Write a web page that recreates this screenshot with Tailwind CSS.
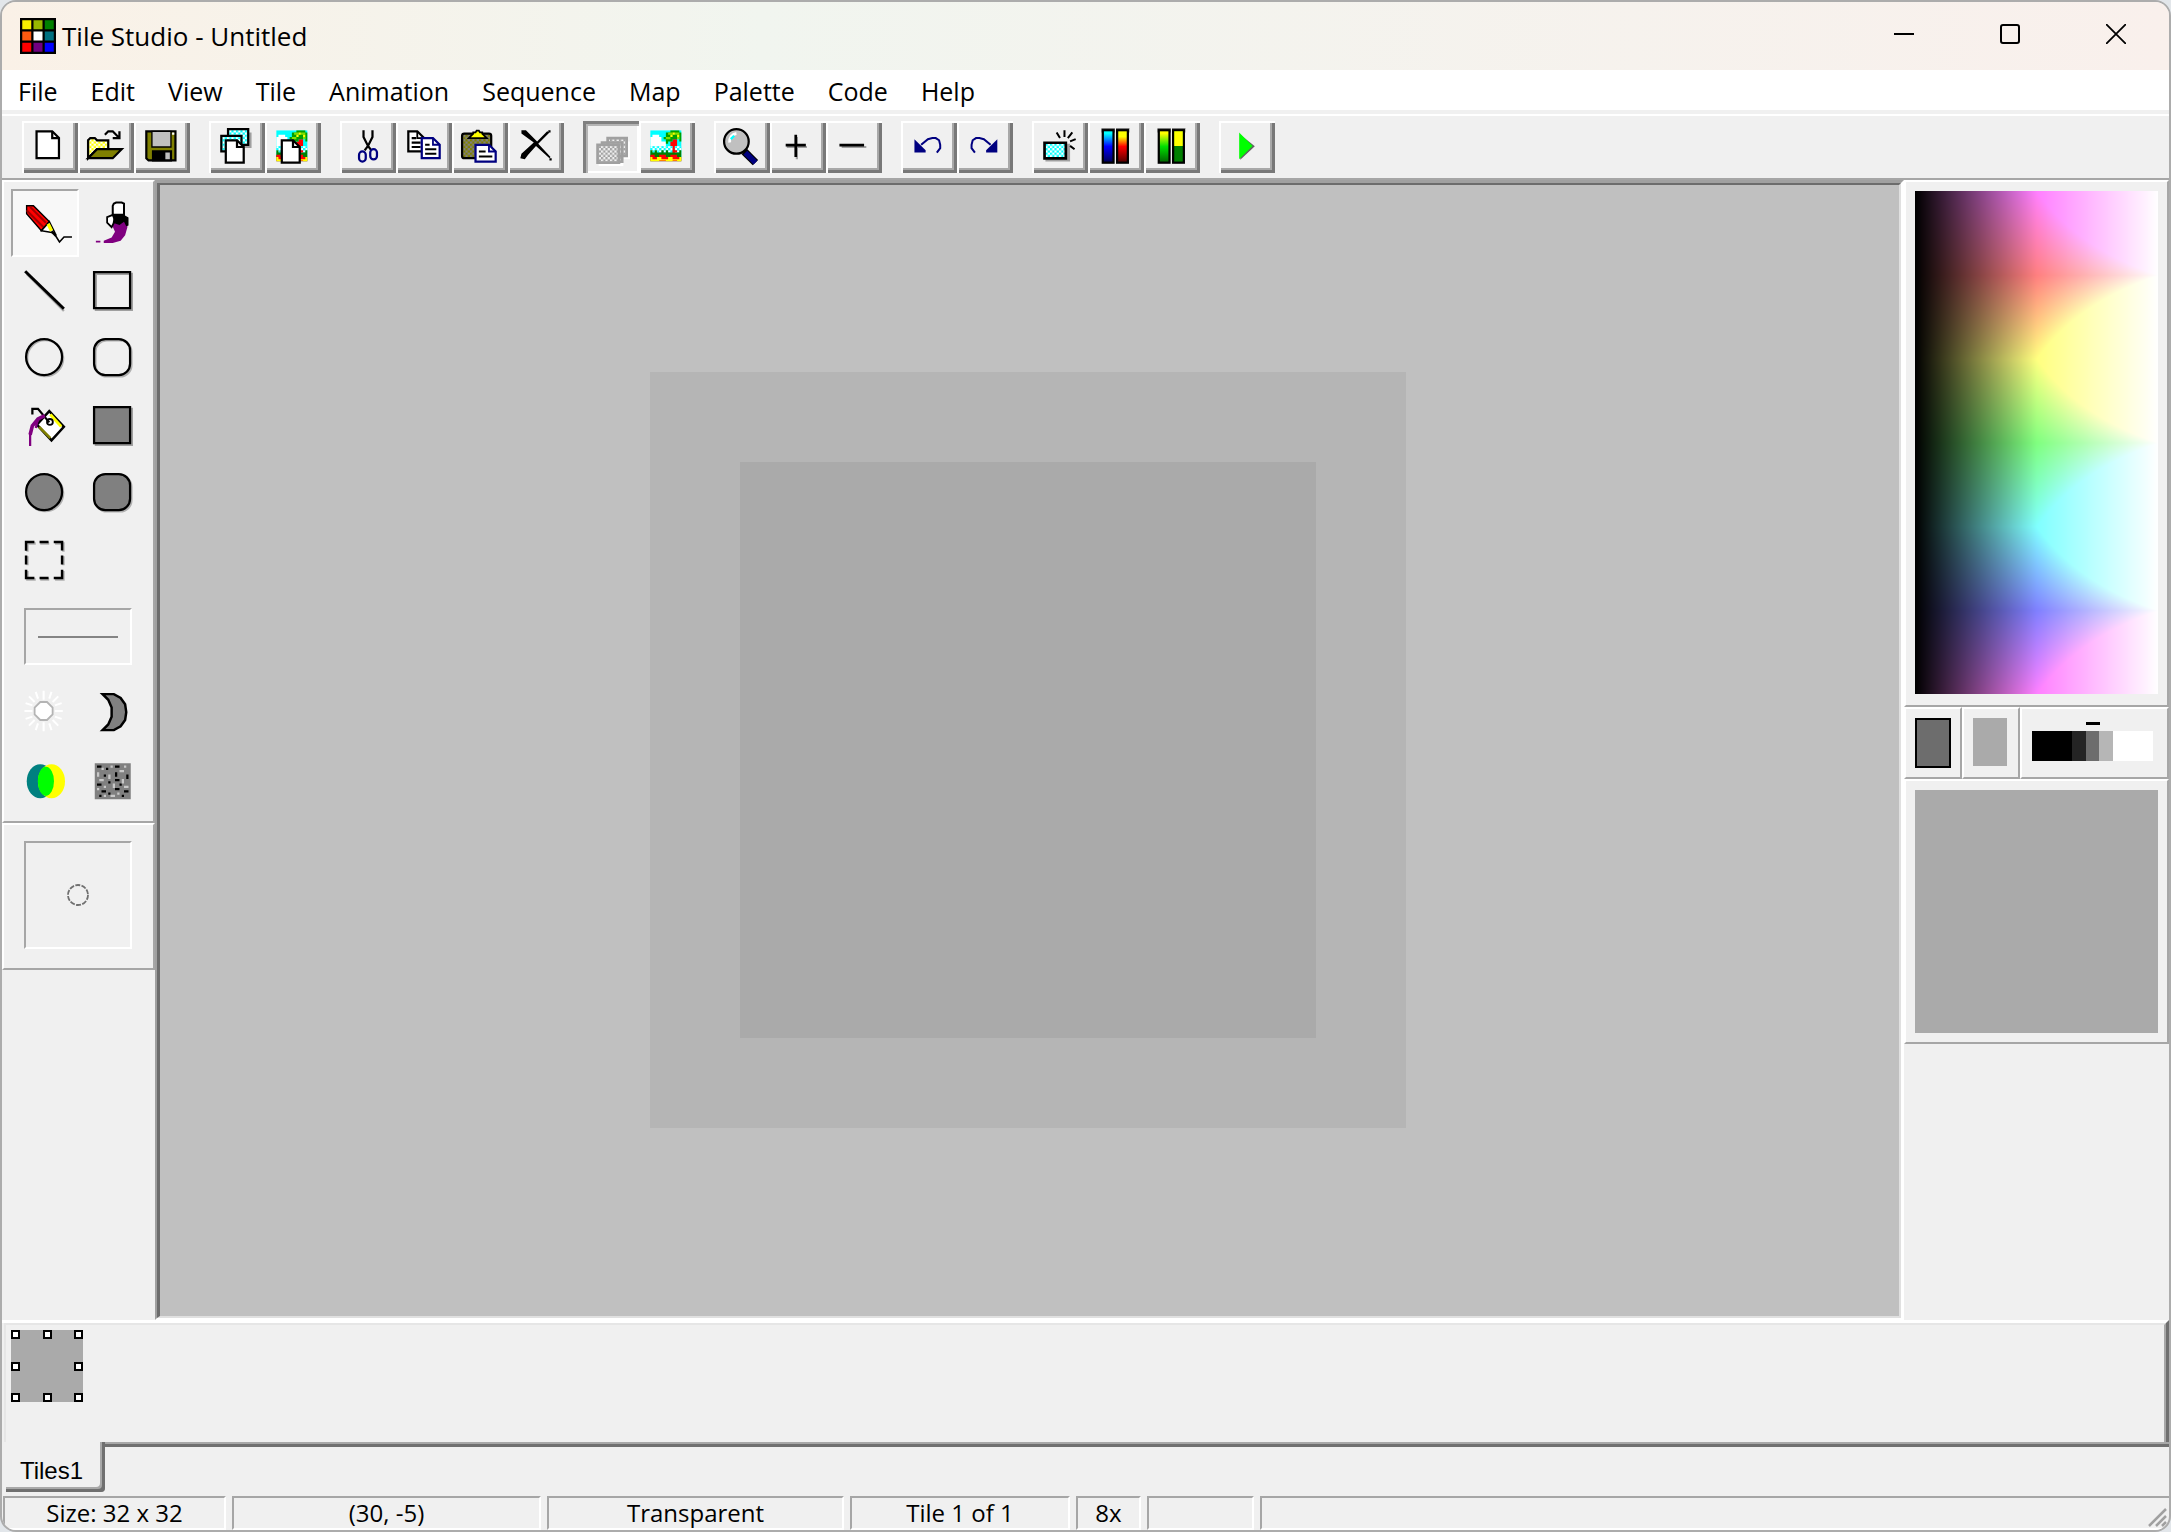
<!DOCTYPE html>
<html lang="en">
<head>
  <meta charset="UTF-8" />
  <meta name="viewport" content="width=device-width, initial-scale=1.0"/>
  <title>Tile Studio - Untitled</title>
  <script src="https://cdn.jsdelivr.net/npm/@tailwindcss/browser@4"></script>
</head>
<body class="bg-[#e2e6ea] text-black font-['Open_Sans','Noto_Sans',sans-serif]">

  <!-- shared patterns and drawings -->
  <svg class="absolute w-0 h-0" aria-hidden="true">
    <defs>
      <pattern id="ditherCyan" width="2" height="2" patternUnits="userSpaceOnUse"><path fill="#fff" d="M0 0h2v2H0z"/><path fill="#00ffff" d="M0 0h1v1H0zM1 1h1v1H1z"/></pattern>
      <pattern id="ditherYellow" width="2" height="2" patternUnits="userSpaceOnUse"><path fill="#fff" d="M0 0h2v2H0z"/><path fill="#ffff00" d="M0 0h1v1H0zM1 1h1v1H1z"/></pattern>
      <pattern id="ditherOlive" width="2" height="2" patternUnits="userSpaceOnUse"><path fill="#808080" d="M0 0h2v2H0z"/><path fill="#808000" d="M0 0h1v1H0zM1 1h1v1H1z"/></pattern>
      <pattern id="ditherGray" width="2" height="2" patternUnits="userSpaceOnUse"><path fill="#efefef" d="M0 0h2v2H0z"/><path fill="#a0a0a0" d="M0 0h1v1H0zM1 1h1v1H1z"/></pattern>
      <linearGradient id="coolBar" x2="0" y2="1"><stop offset="0.1" stop-color="#00ffff"/><stop offset="0.5" stop-color="#0000ff"/><stop offset="1" stop-color="#000050"/></linearGradient>
      <linearGradient id="warmBar" x2="0" y2="1"><stop offset="0.2" stop-color="#ffff00"/><stop offset="0.5" stop-color="#ff0000"/><stop offset="1" stop-color="#500000"/></linearGradient>
      <linearGradient id="greenBar" x2="0" y2="1"><stop offset="0.1" stop-color="#ffff00"/><stop offset="0.5" stop-color="#00e000"/><stop offset="1" stop-color="#006000"/></linearGradient>
    </defs>
    <symbol id="scene" viewBox="0 0 14 14">
      <path fill="#00ffff" d="M0 0h14v14H0z"/>
      <path fill="#fff" d="M0 3h1V2h3v1h1v2h2v2H0z"/>
      <path fill="url(#ditherCyan)" d="M0 7h14v3H0z"/>
      <path fill="#008000" d="M0 9h1v1h1V9h1v1h2V9h1v1h1V9h1v1h2V9h1v1h2V9h1v3H0z"/>
      <path fill="#ff0000" d="M0 11h2v1h2v-1h3v1h2v-1h3v1h2v2H0z"/>
      <path fill="#ffff00" d="M0 12h1v1h2v-1h2v1h3v-1h2v1h3v-1h1v2h-2v-.5h-2v.5H7v-.5H4v.5H0z"/>
      <path fill="#ff0000" d="M10 4h2v3h-1v2h1v1h-2V7h-1V5h1z"/>
      <path fill="#00a000" d="M7 1h2V0h4v1h1v4h-1V3h-1v1h-2v1H8v1H7V4H6V3h1z"/>
      <path fill="#80e000" d="M8 1h2v1H8zM11 1h2v1h-2zM7 3h2v1H7zM12 3h1v1h-1z"/>
      <path fill="#ffff00" d="M10 1h1v1h-1zM9 2h1v1H9zM12 2h1v1h-1z"/>
    </symbol>
  </svg>

  <div class="relative min-h-screen flex flex-col border-2 border-[#acacac] rounded-2xl overflow-hidden bg-[#f0f0f0]">

    <!-- TITLE BAR -->
    <header class="h-[68px] flex items-center pl-[18px] bg-linear-to-r from-[#faf1e7] via-[#f1f5ef] via-35% to-[#f9f0ec]">
      <svg class="w-9 h-9" viewBox="0 0 16 16">
        <path d="M0 0h16v16H0z"/>
        <path fill="#f8f000" d="M1 1h4v4H1z"/><path fill="#98b800" d="M6 1h4v4H6z"/><path fill="#008000" d="M11 1h4v4h-4z"/>
        <path fill="#ff5a10" d="M1 6h4v4H1z"/><path fill="#fff" d="M6 6h4v4H6z"/><path fill="#007080" d="M11 6h4v4h-4z"/>
        <path fill="#ff0000" d="M1 11h4v4H1z"/><path fill="#700080" d="M6 11h4v4H6z"/><path fill="#0000ff" d="M11 11h4v4h-4z"/>
      </svg>
      <h1 class="ml-1.5 text-[26px] leading-8 flex-1">Tile Studio - Untitled</h1>
      <div class="flex h-full">
        <button aria-label="Minimize" class="w-[106px] h-16 flex items-center justify-center"><svg class="w-5 h-5" viewBox="0 0 20 20"><path stroke="#000" stroke-width="2" d="M0 10h20"/></svg></button>
        <button aria-label="Maximize" class="w-[106px] h-16 flex items-center justify-center"><svg class="w-5 h-5" viewBox="0 0 20 20"><rect x="1" y="1" width="18" height="18" rx="2" fill="none" stroke="#000" stroke-width="2"/></svg></button>
        <button aria-label="Close" class="w-[106px] h-16 flex items-center justify-center"><svg class="w-5 h-5" viewBox="0 0 20 20"><path stroke="#000" stroke-width="1.8" d="M0 0l20 20M20 0L0 20"/></svg></button>
      </div>
    </header>

    <!-- MENU -->
    <nav class="h-10 flex items-center gap-[33px] pl-4 pt-0.5 bg-white text-[25px] leading-8">
      <button>File</button>
      <button>Edit</button>
      <button>View</button>
      <button>Tile</button>
      <button>Animation</button>
      <button>Sequence</button>
      <button>Map</button>
      <button>Palette</button>
      <button>Code</button>
      <button>Help</button>
    </nav>

    <!-- TOOLBAR -->
    <div class="mt-1 h-16 flex items-start gap-[19px] pl-5 pt-[5px] border-t-2 border-white">
      <div class="flex">
        <button aria-label="New" class="shadow-[inset_2px_2px_#fff,inset_-3px_-3px_#787878,inset_-5px_-5px_#a8a8a8]">
          <svg class="w-14 h-13" viewBox="0 0 25 23"><path fill="#fff" stroke="#000" d="M6.5 4.5h7l3 3v9h-10z"/><path fill="none" stroke="#000" d="M13.5 4.5v3h3"/></svg>
        </button>
        <button aria-label="Open" class="shadow-[inset_2px_2px_#fff,inset_-3px_-3px_#787878,inset_-5px_-5px_#a8a8a8]">
          <svg class="w-14 h-13" viewBox="0 0 25 23">
            <path fill="url(#ditherYellow)" stroke="#000" d="M4.500 16.500v-8l1-1h2l1 1h5v4h-5z"/>
            <path fill="#808000" stroke="#000" d="M4.500 16.500l4-4h11l-4 4z"/>
            <path fill="none" stroke="#000" d="M12 6l1.500-1.500h2l2.500 2.500M18.500 4.500v3h-3"/>
          </svg>
        </button>
        <button aria-label="Save" class="shadow-[inset_2px_2px_#fff,inset_-3px_-3px_#787878,inset_-5px_-5px_#a8a8a8]">
          <svg class="w-14 h-13" viewBox="0 0 25 23">
            <path fill="#808000" stroke="#000" d="M5.500 4.500h13v13h-12l-1-1z"/>
            <path fill="#c0c0c0" stroke="#000" stroke-width=".6" d="M8 4.500h8.500v7H8z"/>
            <path d="M8 13h9v5H8z"/><path fill="#c0c0c0" d="M14 14h2v3h-2z"/><path fill="#fff" d="M17 5h1v1h-1z"/>
          </svg>
        </button>
      </div>
      <div class="flex">
        <button aria-label="New tile set" class="shadow-[inset_2px_2px_#fff,inset_-3px_-3px_#787878,inset_-5px_-5px_#a8a8a8]">
          <svg class="w-14 h-13" viewBox="0 0 25 23">
            <path fill="#a0a0a0" d="M10 5h9v7h-9z"/>
            <path fill="url(#ditherCyan)" stroke="#000" d="M8.500 3.500h9v7h-9z"/>
            <path fill="url(#ditherCyan)" stroke="#000" d="M5.500 6.500h9v7h-9z"/>
            <path fill="#fff" stroke="#000" d="M7.500 8.500h5l3 3v7h-8z"/><path fill="none" stroke="#000" d="M12.500 8.500v3h3"/>
          </svg>
        </button>
        <button aria-label="New map" class="shadow-[inset_2px_2px_#fff,inset_-3px_-3px_#787878,inset_-5px_-5px_#a8a8a8]">
          <svg class="w-14 h-13" viewBox="0 0 25 23">
            <use href="#scene" x="5" y="4" width="14" height="14"/>
            <path fill="#fff" stroke="#000" d="M7.500 8.500h5l3 3v7h-8z"/><path fill="none" stroke="#000" d="M12.500 8.500v3h3"/>
          </svg>
        </button>
      </div>
      <div class="flex">
        <button aria-label="Cut" class="shadow-[inset_2px_2px_#fff,inset_-3px_-3px_#787878,inset_-5px_-5px_#a8a8a8]">
          <svg class="w-14 h-13" viewBox="0 0 25 23">
            <path fill="none" stroke="#000" d="M10.500 4v3l2 4 1.500 2M14.500 4v3l-2 4-1.500 2"/>
            <g fill="none" stroke="#000080"><rect x="8.500" y="13.500" width="3" height="4.500" rx="1.500"/><rect x="13.500" y="12.500" width="3" height="4.500" rx="1.500"/></g>
          </svg>
        </button>
        <button aria-label="Copy" class="shadow-[inset_2px_2px_#fff,inset_-3px_-3px_#787878,inset_-5px_-5px_#a8a8a8]">
          <svg class="w-14 h-13" viewBox="0 0 25 23">
            <path fill="#fff" stroke="#000" d="M5.500 4.500h4l3 3v6h-7zM7 7.500h2M7 9.500h4M7 11.500h4"/><path fill="none" stroke="#000" stroke-width=".8" d="M9.500 4.500v3h3"/>
            <path fill="#fff" stroke="#000080" d="M11.500 7.500h5l3 3v6h-8z"/><path fill="none" stroke="#000080" stroke-width=".8" d="M16.500 7.500v3h3"/>
            <path stroke="#000" stroke-width=".9" d="M13 10.500h2M13 12.500h5M13 14.500h5"/>
          </svg>
        </button>
        <button aria-label="Paste" class="shadow-[inset_2px_2px_#fff,inset_-3px_-3px_#787878,inset_-5px_-5px_#a8a8a8]">
          <svg class="w-14 h-13" viewBox="0 0 25 23">
            <rect x="4.500" y="5.500" width="13" height="11" rx="1" fill="url(#ditherOlive)" stroke="#000"/>
            <path fill="#ffff00" stroke="#000" stroke-width=".8" d="M7.500 7.500l2-2V5h1l.5-.8h1l.5.8h1v.5l2 2z"/>
            <path fill="#fff" stroke="#000080" d="M10.500 10.500h6l3 3v4.500h-9z"/><path fill="none" stroke="#000080" stroke-width=".8" d="M16.500 10.500v3h3"/>
            <path stroke="#000" stroke-width=".9" d="M12 13.500h3M12 15.700h6"/>
          </svg>
        </button>
        <button aria-label="Delete" class="shadow-[inset_2px_2px_#fff,inset_-3px_-3px_#787878,inset_-5px_-5px_#a8a8a8]">
          <svg class="w-14 h-13" viewBox="0 0 25 23">
            <path d="M6 4h2l5 5 4.500-4.500 1 .500-5 5 5.500 6-.500.500-6-5.500-3.500 4-1.500 2-2-.500.500-2 5.500-5L6 5.500z"/><path d="M18 4h1v1h-1zM18.500 16.500h1v1h-1z"/>
          </svg>
        </button>
      </div>
      <div class="flex">
        <button aria-label="Tiles" aria-pressed="true" class="shadow-[inset_3px_3px_#808080,inset_5px_5px_#b4b4b4,inset_-2px_-2px_#fff]">
          <svg class="w-14 h-13" viewBox="0 0 25 23">
            <path fill="#fff" d="M10 9h11v8h-3v3H7v-1h10v-3h3z"/>
            <path fill="url(#ditherGray)" stroke="#a0a0a0" stroke-width="1.200" d="M11 7.500h8.500v8H11zM8.500 9.500h9v8.500h-9z"/>
            <path fill="url(#ditherGray)" stroke="#a0a0a0" stroke-width="1.200" d="M6.500 10.500h9.500v8H6.500z"/>
          </svg>
        </button>
        <button aria-label="Map" class="shadow-[inset_2px_2px_#fff,inset_-3px_-3px_#787878,inset_-5px_-5px_#a8a8a8]">
          <svg class="w-14 h-13" viewBox="0 0 25 23"><use href="#scene" x="5" y="4" width="14" height="14"/></svg>
        </button>
      </div>
      <div class="flex">
        <button aria-label="Zoom" class="shadow-[inset_2px_2px_#fff,inset_-3px_-3px_#787878,inset_-5px_-5px_#a8a8a8]">
          <svg class="w-14 h-13" viewBox="0 0 25 23">
            <path stroke="#000" stroke-width="3.400" d="M13.500 13.500l5 5"/><path stroke="#000080" stroke-width="2.400" d="M14 14l4.500 4.500"/>
            <circle cx="10" cy="9" r="5.500" fill="#c0c0c0" stroke="#000"/><path fill="none" stroke="#fff" stroke-width="1.300" d="M7 9.500A3.500 3.500 0 0 1 10 5.500"/><path stroke="#00ffff" d="M7.500 8l1.500-1.500"/>
          </svg>
        </button>
        <button aria-label="Zoom in" class="shadow-[inset_2px_2px_#fff,inset_-3px_-3px_#787878,inset_-5px_-5px_#a8a8a8]">
          <svg class="w-14 h-13" viewBox="0 0 25 23"><path stroke="#a0a0a0" d="M7.500 11.500h9M12 7v10"/><path stroke="#000" stroke-width="1.200" d="M7 10.700h9M11.500 6v10"/></svg>
        </button>
        <button aria-label="Zoom out" class="shadow-[inset_2px_2px_#fff,inset_-3px_-3px_#787878,inset_-5px_-5px_#a8a8a8]">
          <svg class="w-14 h-13" viewBox="0 0 25 23"><path stroke="#a0a0a0" d="M7 11.500h11"/><path stroke="#000" stroke-width="1.200" d="M6 10.700h11"/></svg>
        </button>
      </div>
      <div class="flex">
        <button aria-label="Undo" class="shadow-[inset_2px_2px_#fff,inset_-3px_-3px_#787878,inset_-5px_-5px_#a8a8a8]">
          <svg class="w-14 h-13" viewBox="0 0 25 23"><path fill="#000080" d="M6 8l5 5v1H6z"/><path fill="none" stroke="#000080" stroke-width=".9" d="M9 10.500l3-2.500 2-.500h1.500l1.500 1 .500 2v1.500l-1.500 2"/></svg>
        </button>
        <button aria-label="Redo" class="shadow-[inset_2px_2px_#fff,inset_-3px_-3px_#787878,inset_-5px_-5px_#a8a8a8]">
          <svg class="w-14 h-13" viewBox="0 0 25 23"><path fill="#000080" d="M18 8l-5 5v1h5z"/><path fill="none" stroke="#000080" stroke-width=".9" d="M15 10.500l-3-2.500-2-.500H8.500L7 8.500l-.500 2v1.500l1.500 2"/></svg>
        </button>
      </div>
      <div class="flex">
        <button aria-label="New tile" class="shadow-[inset_2px_2px_#fff,inset_-3px_-3px_#787878,inset_-5px_-5px_#a8a8a8]">
          <svg class="w-14 h-13" viewBox="0 0 25 23">
            <path fill="#a0a0a0" d="M6 10h11v8H6z"/><path fill="url(#ditherCyan)" stroke="#000" stroke-width="1.200" d="M5.600 9.600h9.500v7H5.600z"/>
            <path fill="none" stroke="#000" stroke-width=".9" d="M14.500 4v3M11 5l1.500 2.500M18 5l-2 2.500M19.500 8l-2.500 1M17 11l2 1.500"/>
          </svg>
        </button>
        <button aria-label="Palette gradient" class="shadow-[inset_2px_2px_#fff,inset_-3px_-3px_#787878,inset_-5px_-5px_#a8a8a8]">
          <svg class="w-14 h-13" viewBox="0 0 25 23">
            <path fill="#808080" d="M6 3h6v2H6zM12.500 3h6v2h-6z"/>
            <rect x="6.600" y="4" width="4.800" height="14.500" fill="url(#coolBar)" stroke="#000"/><rect x="13" y="4" width="4.800" height="14.500" fill="url(#warmBar)" stroke="#000"/>
          </svg>
        </button>
        <button aria-label="Palette range" class="shadow-[inset_2px_2px_#fff,inset_-3px_-3px_#787878,inset_-5px_-5px_#a8a8a8]">
          <svg class="w-14 h-13" viewBox="0 0 25 23">
            <path fill="#808080" d="M6 3h6v2H6zM12.500 3h6v2h-6z"/>
            <rect x="6.600" y="4" width="4.800" height="14.500" fill="url(#greenBar)" stroke="#000"/><rect x="13" y="4" width="4.800" height="14.500" fill="#008000" stroke="#000"/><path fill="#ffff00" d="M13.500 4.500h3.800V11h-3.800z"/>
          </svg>
        </button>
      </div>
      <button aria-label="Run" class="shadow-[inset_2px_2px_#fff,inset_-3px_-3px_#787878,inset_-5px_-5px_#a8a8a8]">
        <svg class="w-14 h-13" viewBox="0 0 25 23"><path fill="#606060" d="M9.500 6l6.500 5.200-6.500 6z"/><path fill="#00ff00" d="M9 5l6 6-6 6z"/></svg>
      </button>
    </div>

    <main class="flex-1 flex border-t-2 border-[#a6a6a6]">

      <!-- DRAWING TOOLS -->
      <aside class="w-[153px]">
        <div class="border-2 border-t-white border-l-white border-r-[#a6a6a6] border-b-[#a6a6a6] h-[643px] pl-[7px] pt-[7px]">
          <div class="w-[135px] h-[405px] grid grid-cols-2 grid-rows-6">
            <button aria-label="Pencil" aria-pressed="true" class="bg-[#f8f8f8] border-2 border-t-[#a6a6a6] border-l-[#a6a6a6] border-b-white border-r-white">
              <svg class="w-full h-full" viewBox="1 1 28 28">
                <path fill="#ff0000" stroke="#000" stroke-width=".6" d="M7 7.500h3l7 7-3.500 4L7 11z"/><path stroke="#a00000" stroke-width=".9" d="M7 9.500l7.500 7.500M8.500 8l7 7"/>
                <path fill="#fff" stroke="#000" stroke-width=".7" d="M17 14.500l2.500 5-6-1z"/><path stroke="#ffff00" stroke-width="1.500" d="M16.500 15.500l1.500 3"/>
                <path stroke="#000" stroke-width="1.200" d="M18 18.800l2 2"/><path fill="none" stroke="#000" stroke-width=".7" d="M19.500 20.300l2 3.200 2-2.200H27"/>
              </svg>
            </button>
            <button aria-label="Brush">
              <svg class="w-full h-full" viewBox="0 0 30 30">
                <path fill="#800080" d="M14 14.500l7.500-.5v3l-1 3.500-2 2.500-3.500 1h-4v-1l3.500-1.500 1.500-2.500z"/><path fill="#800080" d="M7.500 23h2v.8h-2z"/>
                <path fill="#fff" stroke="#000" stroke-width=".9" d="M15.500 6.500l1-.5h2.500l1 .5v5H15v-4z"/>
                <path fill="#fff" stroke="#000" stroke-width=".8" d="M15 11.500l-2.500 1v2.500l2 2 1.500-3z"/>
                <path d="M15.500 12l4-.8 2.500 1.500v3.500l-1 .3-1-2-2 1.500-3-1z"/>
              </svg>
            </button>
            <button aria-label="Line"><svg class="w-full h-full" viewBox="0 0 30 30"><path stroke="#a8a8a8" d="M7 7.500l16.500 16.500"/><path stroke="#000" stroke-width="1.300" d="M6.300 6.300L23.500 23"/></svg></button>
            <button aria-label="Rectangle"><svg class="w-full h-full" viewBox="0 0 30 30"><path fill="none" stroke="#a0a0a0" d="M7.500 7.500h16v16h-16z"/><path fill="none" stroke="#000" d="M6.700 6.700h16v16h-16z"/></svg></button>
            <button aria-label="Ellipse"><svg class="w-full h-full" viewBox="0 0 30 30"><circle cx="15.200" cy="15.200" r="8" fill="none" stroke="#b0b0b0"/><circle cx="14.700" cy="14.700" r="8" fill="none" stroke="#000"/></svg></button>
            <button aria-label="Rounded rectangle"><svg class="w-full h-full" viewBox="0 0 30 30"><rect x="7.300" y="7.300" width="16" height="16" rx="5" fill="none" stroke="#b0b0b0"/><rect x="6.700" y="6.700" width="16" height="16" rx="5" fill="none" stroke="#000"/></svg></button>
            <button aria-label="Fill">
              <svg class="w-full h-full" viewBox="0 0 30 30">
                <path fill="#fff" stroke="#000" stroke-width="1.100" d="M17 8.500l6.500 7-5.500 6-6.500-7z"/><path stroke="#ffff00" stroke-width="1.300" d="M17.500 10l4.800 5.300"/><path stroke="#808000" stroke-width="1.200" d="M12.500 15.500l5 5"/>
                <path fill="none" stroke="#000" d="M9.500 10V7.500h2.500l5 6"/><circle cx="17.300" cy="13.300" r="1.300" fill="none" stroke="#000" stroke-width=".8"/>
                <path fill="none" stroke="#800080" stroke-width="1.600" d="M15 10.500l-3 1.500-2.500 3-1 4"/><path stroke="#800080" d="M8.500 18v6M12 12l-1 4"/>
              </svg>
            </button>
            <button aria-label="Filled rectangle"><svg class="w-full h-full" viewBox="0 0 30 30"><path fill="none" stroke="#a0a0a0" d="M7.500 7.500h16v16h-16z"/><path fill="#808080" stroke="#000" d="M6.700 6.700h16v16h-16z"/></svg></button>
            <button aria-label="Filled ellipse"><svg class="w-full h-full" viewBox="0 0 30 30"><circle cx="15.200" cy="15.200" r="8" fill="none" stroke="#b0b0b0"/><circle cx="14.700" cy="14.700" r="8" fill="#808080" stroke="#000"/></svg></button>
            <button aria-label="Filled rounded rectangle"><svg class="w-full h-full" viewBox="0 0 30 30"><rect x="7.300" y="7.300" width="16" height="16" rx="5" fill="none" stroke="#b0b0b0"/><rect x="6.700" y="6.700" width="16" height="16" rx="5" fill="#808080" stroke="#000"/></svg></button>
            <button aria-label="Select"><svg class="w-full h-full" viewBox="0 0 30 30"><g fill="none" stroke-width="1.100"><path stroke="#b0b0b0" d="M7.300 11V7.300H11M13 7.300h4M19.600 7.300h3.700V11M23.300 13v4M23.300 19.600v3.700h-3.700M17 23.300h-4M11 23.300H7.300v-3.700M7.300 17v-4"/><path stroke="#000" d="M6.700 10.500V6.700h3.700M12.700 6.700h4M19 6.700h3.700v3.700M22.700 12.700v4M22.700 19v3.700H19M16.700 22.700h-4M10.400 22.700H6.700V19M6.700 16.700v-4"/></g></svg></button>
          </div>
          <div class="mt-3.5 ml-[13px] w-[108px] h-[57px] flex items-center px-3 border-2 border-t-[#a6a6a6] border-l-[#a6a6a6] border-b-white border-r-white">
            <div class="w-full h-0.5 bg-[#848484]"></div>
          </div>
          <div class="mt-3 w-[135px] h-[136px] grid grid-cols-2 grid-rows-2">
            <button aria-label="Lighten">
              <svg class="w-full h-full" viewBox="0 0 30 30">
                <path stroke="#fff" stroke-width=".9" d="M14.500 6v4M14.500 20v4M6 15h3.500M19.500 15H23M8 8.500l2.500 2.500M18.500 19l2.500 2.500M21 8.500L18.500 11M10.500 19L8 21.500M11 6.500l1 3M17 20.500l1 3M18 6.500l-1 3M12 20.500l-1 3M6.500 11.500l3 1M19.500 17.500l3 1M6.500 18.500l3-1M19.500 12.500l3-1"/>
                <path fill="#fff" stroke="#b4b4b4" stroke-width=".8" d="M13 11h3l2.500 2.500v3L16 19h-3l-2.500-2.500v-3z"/>
              </svg>
            </button>
            <button aria-label="Darken"><svg class="w-full h-full" viewBox="0 0 30 30"><path fill="#808080" stroke="#000" stroke-width="1.100" d="M10.500 7.500h5l3 1.700 2 2.800.5 3.500-.5 3.500-2 2.800-3 1.700h-5l2.500-2.500 1.500-3.500V13.500L13 10z"/></svg></button>
            <button aria-label="Blend">
              <svg class="w-full h-full" viewBox="0 0 30 30">
                <ellipse cx="13" cy="16" rx="6" ry="7.600" fill="#008080"/><ellipse cx="18" cy="16" rx="6" ry="7.600" fill="#ffff00"/><ellipse cx="15.500" cy="16" rx="3.600" ry="6.500" fill="#00ff00"/>
              </svg>
            </button>
            <button aria-label="Noise">
              <svg class="w-full h-full" viewBox="0 0 30 30">
                <path fill="#808080" d="M7 8h16v16H7z"/>
                <path d="M8 9h2v1H8zM12 10h1v1h-1zM16 9h2v1h-2zM11 13h1v1h-1zM16 12h1v2h-1zM21 13h1v2h-1zM8 17h2v1H8zM13 16h1v1h-1zM16 15h2v1h-2zM10 20h2v1h-2zM13 21h1v1h-1zM16 19h2v1h-2zM20 20h2v1h-2zM9 22h1v1H9zM19 22h1v1h-1zM18 17h1v1h-1z"/>
                <path fill="#c8c8c8" d="M10 10h1v1h-1zM14 9h1v1h-1zM20 9h1v1h-1zM8 12h1v2H8zM13 13h1v2h-1zM18 11h2v1h-2zM19 15h1v2h-1zM9 15h2v1H9zM15 17h1v2h-1zM11 18h1v1h-1zM20 18h2v1h-2zM8 19h1v1H8zM14 22h2v1h-2zM17 21h1v1h-1zM11 22h1v1h-1z"/>
              </svg>
            </button>
          </div>
        </div>
        <div class="border-2 border-t-white border-l-white border-r-[#a6a6a6] border-b-[#a6a6a6] h-[147px] pl-5 pt-4">
          <div class="w-[108px] h-[108px] flex items-center justify-center border-2 border-t-[#a6a6a6] border-l-[#a6a6a6] border-b-white border-r-white">
            <svg class="w-6 h-6" viewBox="0 0 24 24"><circle cx="12" cy="12" r="10" fill="none" stroke="#707070" stroke-width="1.800" stroke-dasharray="5 1.300"/></svg>
          </div>
        </div>
      </aside>

      <!-- CANVAS -->
      <section class="flex-1 flex border-t-3 border-l-2 border-r-3 border-b-2 border-t-[#a0a0a0] border-l-[#a0a0a0] border-r-white border-b-white">
        <div class="flex-1 flex items-center justify-center pr-1 pb-0.5 bg-[#c0c0c0] border-t-2 border-l-3 border-r-2 border-b-2 border-t-[#6c6c6c] border-l-[#6c6c6c] border-r-[#e0e0e0] border-b-[#e0e0e0]">
          <div class="w-[756px] h-[756px] flex items-center justify-center bg-[#b5b5b5]">
            <div class="w-[576px] h-[576px] bg-[#aaaaaa]"></div>
          </div>
        </div>
      </section>

      <!-- COLORS -->
      <aside class="w-[265px]">
        <div class="border-2 border-t-white border-l-white border-r-[#a6a6a6] border-b-[#a6a6a6] pl-[9px] pt-[9px] pb-[11px]">
          <canvas id="picker" width="243" height="503" class="block"></canvas>
        </div>
        <div class="flex h-[72px]">
          <div class="w-[58px] border-2 border-t-white border-l-white border-r-[#a6a6a6] border-b-[#a6a6a6] pl-[9px] pt-[9px]">
            <button aria-label="Foreground color" class="block w-9 h-[50px] bg-[#6d6d6d] border-2 border-black"></button>
          </div>
          <div class="w-[58px] border-2 border-t-white border-l-white border-r-[#a6a6a6] border-b-[#a6a6a6] pl-[9px] pt-[9px]">
            <button aria-label="Background color" class="block w-[34px] h-12 bg-[#aaaaaa]"></button>
          </div>
          <div class="flex-1 border-2 border-t-white border-l-white border-r-[#a6a6a6] border-b-[#a6a6a6] pl-[10px] pt-[13px]">
            <div class="w-[121px]">
              <div class="h-[3px] w-3.5 ml-[54px] bg-black"></div>
              <div class="mt-1.5 h-[30px] grid grid-cols-9">
                <div class="bg-black col-span-3"></div>
                <div class="bg-[#242424]"></div>
                <div class="bg-[#6d6d6d]"></div>
                <div class="bg-[#b6b6b6]"></div>
                <div class="bg-white col-span-3"></div>
              </div>
            </div>
          </div>
        </div>
        <div class="border-2 border-t-white border-l-white border-r-[#a6a6a6] border-b-[#a6a6a6] pl-[9px] pt-[9px] pb-[9px]">
          <div class="w-[243px] h-[243px] bg-[#aaaaaa]"></div>
        </div>
      </aside>
    </main>

    <!-- TILE LIST -->
    <div class="h-[122px] border-t-3 border-r-3 border-t-white border-r-[#707070]">
      <div class="h-full pl-[5px] pt-[5px] ml-0.5 border-t-2 border-r-2 border-l-2 border-t-[#e6e6e6] border-l-[#e6e6e6] border-r-[#a8a8a8]">
        <button aria-label="Tile 1" class="w-18 h-18 grid grid-cols-3 grid-rows-3 bg-[#aaaaaa]">
          <span class="w-[9px] h-[9px] bg-white border-2 border-black"></span>
          <span class="w-[9px] h-[9px] bg-white border-2 border-black justify-self-center"></span>
          <span class="w-[9px] h-[9px] bg-white border-2 border-black justify-self-end"></span>
          <span class="w-[9px] h-[9px] bg-white border-2 border-black self-center"></span>
          <span></span>
          <span class="w-[9px] h-[9px] bg-white border-2 border-black self-center justify-self-end"></span>
          <span class="w-[9px] h-[9px] bg-white border-2 border-black self-end"></span>
          <span class="w-[9px] h-[9px] bg-white border-2 border-black self-end justify-self-center"></span>
          <span class="w-[9px] h-[9px] bg-white border-2 border-black self-end justify-self-end"></span>
        </button>
      </div>
    </div>
    <div class="flex pl-1 h-[50px]">
      <button class="w-[99px] pt-2 pr-2 text-2xl leading-8 font-['Liberation_Sans',sans-serif] rounded-br-sm shadow-[inset_-3px_-3px_#707070,inset_-5px_-5px_#a8a8a8]">Tiles1</button>
      <div class="flex-1 h-[5px] border-t-2 border-[#a8a8a8] bg-[#707070]"></div>
    </div>

    <!-- STATUS BAR -->
    <footer class="mt-1 h-[34px] flex gap-1.5 pl-px text-2xl leading-[30px] text-center">
      <div class="w-[223px] border-2 border-t-[#a6a6a6] border-l-[#a6a6a6] border-r-white border-b-white">Size: 32 x 32</div>
      <div class="w-[309px] border-2 border-t-[#a6a6a6] border-l-[#a6a6a6] border-r-white border-b-white">(30, -5)</div>
      <div class="w-[297px] border-2 border-t-[#a6a6a6] border-l-[#a6a6a6] border-r-white border-b-white">Transparent</div>
      <div class="w-[220px] border-2 border-t-[#a6a6a6] border-l-[#a6a6a6] border-r-white border-b-white">Tile 1 of 1</div>
      <div class="w-[65px] border-2 border-t-[#a6a6a6] border-l-[#a6a6a6] border-r-white border-b-white">8x</div>
      <div class="w-[107px] border-2 border-t-[#a6a6a6] border-l-[#a6a6a6] border-r-white border-b-white"></div>
      <div class="flex-1 flex justify-end items-end border-t-2 border-l-2 border-b-2 border-t-[#a6a6a6] border-l-[#a6a6a6] border-b-white">
        <svg class="w-6 h-6" viewBox="0 0 24 24"><path fill="none" stroke="#a0a0a0" stroke-width="2.500" d="M4 22L21 5M11 22l10-10M17 22l4-4"/></svg>
      </div>
    </footer>
  </div>

  <script>
    // hue runs down from magenta, brightness runs left to right
    const picker = document.getElementById('picker');
    const ctx = picker.getContext('2d');
    const w = picker.width;
    const h = picker.height;
    const img = ctx.createImageData(w, h);
    const weight = (hue, center) => {
      const d = Math.abs(((hue - center + 540) % 360) - 180);
      return Math.max(0, Math.min(1, 2 - d / 60));
    };

    for (let y = 0; y < h; y++) {
      const hue = (300 + 360 * y / h) % 360;
      for (let x = 0; x < w; x++) {
        const i = (y * w + x) * 4;
        img.data[i] = 255 * Math.min(1, x / w * (1 + weight(hue, 0)));
        img.data[i + 1] = 255 * Math.min(1, x / w * (1 + weight(hue, 120)));
        img.data[i + 2] = 255 * Math.min(1, x / w * (1 + weight(hue, 240)));
        img.data[i + 3] = 255;
      }
    }
    ctx.putImageData(img, 0, 0);
  </script>
</body>
</html>
